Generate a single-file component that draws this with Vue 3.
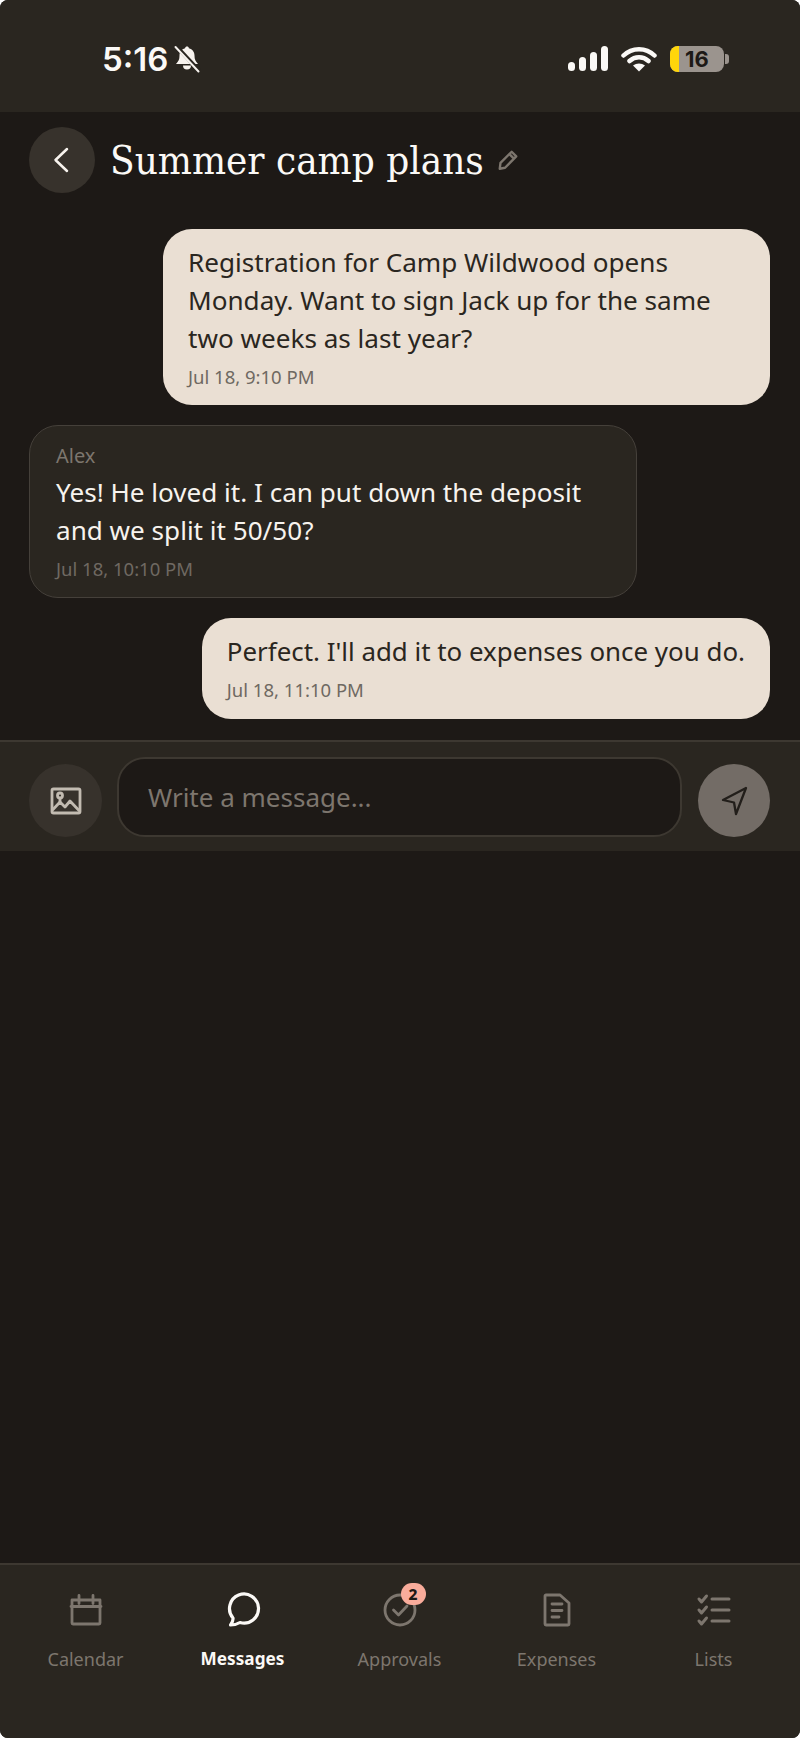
<script setup>
const messages = [
  { id: 1, mine: true, text: 'Registration for Camp Wildwood opens Monday. Want to sign Jack up for the same two weeks as last year?', time: 'Jul 18, 9:10 PM' },
  { id: 2, mine: false, author: 'Alex', text: 'Yes! He loved it. I can put down the deposit and we split it 50/50?', time: 'Jul 18, 10:10 PM' },
  { id: 3, mine: true, text: "Perfect. I'll add it to expenses once you do.", time: 'Jul 18, 11:10 PM' },
]
const tabs = ['Calendar', 'Messages', 'Approvals', 'Expenses', 'Lists']
</script>

<template>
  <div class="screen">
    <div class="status">
      <div class="status-left">
        <span class="clock">5:16</span>
        <svg width="28" height="28" viewBox="0 0 28 28">
          <path d="M14 1.500c1 0 1.800.7 1.900 1.700 3.600.9 5.600 3.700 5.600 7.300 0 4 1 5.800 3.500 8.500H3c2.500-2.700 3.500-4.500 3.500-8.500 0-3.600 2-6.400 5.600-7.300.1-1 .9-1.700 1.900-1.700zM10 20.500h8a4 4 0 0 1-8 0z" fill="#f7f3ee" />
          <path d="M3 1 26.500 26" stroke="#2a2620" stroke-width="4" />
          <path d="M2.500 2 25.500 26.500" stroke="#f7f3ee" stroke-width="2" stroke-linecap="round" />
        </svg>
      </div>
      <div class="status-right">
        <svg width="40" height="26" viewBox="0 0 40 26" fill="#fbf9f6">
          <rect x="0" y="16" width="7" height="9" rx="3.500" />
          <rect x="11" y="11" width="7" height="14" rx="3.500" />
          <rect x="22" y="6" width="7" height="19" rx="3.500" />
          <rect x="33" y="0" width="7" height="25" rx="3.500" />
        </svg>
        <svg width="36" height="26" viewBox="0 0 36 26">
          <path d="M2.500 9.500C11 1 25 1 33.500 9.500M8.500 15c5.500-5 13.500-5 19 0" fill="none" stroke="#fbf9f6" stroke-width="4.500" stroke-linecap="round" />
          <path d="M18 25.500l-6-6c3.500-2.800 8.500-2.800 12 0z" fill="#fbf9f6" />
        </svg>
        <div class="battery">
          <div class="battery-body">
            <span class="battery-fill"></span>
            <span class="battery-num">16</span>
          </div>
          <span class="battery-cap"></span>
        </div>
      </div>
    </div>

    <div class="header">
      <button class="back">
        <svg width="24" height="28" viewBox="0 0 24 28"><path d="M17 3 5.500 14 17 25" fill="none" stroke="#f7f3ee" stroke-width="2.500" stroke-linecap="round" stroke-linejoin="round" /></svg>
      </button>
      <h1 class="title">Summer camp plans</h1>
      <svg class="pencil" width="22" height="22" viewBox="0 0 24 24" fill="none" stroke="#7d766e" stroke-width="2.600" stroke-linejoin="round">
        <path d="M3 21.500l.8-6.300L16 3l5 5L8.800 20.500z" />
        <path d="M13.500 5.500l5 5" />
      </svg>
    </div>

    <div class="thread">
      <div v-for="m in messages" :key="m.id" class="bubble" :class="m.mine ? 'mine' : 'theirs'">
        <div v-if="m.author" class="author">{{ m.author }}</div>
        <div class="text">{{ m.text }}</div>
        <div class="time">{{ m.time }}</div>
      </div>
    </div>

    <div class="composer">
      <button class="photo">
        <svg width="32" height="28" viewBox="0 0 32 28" fill="none" stroke="#c2bbb1" stroke-width="2.800" stroke-linejoin="round">
          <rect x="2" y="2" width="28" height="24" rx="1.500" />
          <path d="M2.500 23l7.500-8 5 5 5-6 9.500 10" />
          <circle cx="10" cy="8.500" r="2.500" />
          <path d="M10 11v4" />
        </svg>
      </button>
      <div class="input">Write a message...</div>
      <button class="send">
        <svg width="30" height="30" viewBox="0 0 30 30" fill="none" stroke="#221e1a" stroke-width="2.300" stroke-linejoin="round">
          <path d="M27 2 4 14l11 2.500 2 11.500z" />
        </svg>
      </button>
    </div>

    <div class="fill"></div>

    <nav class="tabs">
      <div v-for="t in tabs" :key="t" class="tab" :class="{ active: t === 'Messages' }">
        <div class="tab-icon">
          <svg v-if="t === 'Calendar'" width="36" height="36" viewBox="0 0 36 36" fill="none" stroke="#7d766e" stroke-width="2.800" stroke-linecap="round" stroke-linejoin="round">
            <path d="M4 8h28v23a1 1 0 0 1-1 1H5a1 1 0 0 1-1-1zM3 14.500h30M11 3.500v8M25 3.500v8" />
          </svg>
          <svg v-if="t === 'Messages'" width="36" height="36" viewBox="0 0 36 36" fill="none" stroke="#fbf9f6" stroke-width="3.200" stroke-linecap="round" stroke-linejoin="round">
            <path transform="translate(1.500 0)" d="M4 33c1.800-2.200 2.800-4.300 2.500-7A14.500 14.500 0 1 1 13.500 30.500C10.500 32.300 7.500 33 4 33z" />
          </svg>
          <svg v-if="t === 'Approvals'" width="36" height="36" viewBox="0 0 36 36" fill="none" stroke="#7d766e" stroke-width="2.800" stroke-linecap="round" stroke-linejoin="round">
            <circle cx="18" cy="18" r="15" />
            <path d="M11.500 18l5 5 8.500-9" />
          </svg>
          <svg v-if="t === 'Expenses'" width="36" height="36" viewBox="0 0 36 36" fill="none" stroke="#7d766e" stroke-width="2.800" stroke-linecap="round" stroke-linejoin="round">
            <path d="M7 3h14l9 8v21a1 1 0 0 1-1 1H7a1 1 0 0 1-1-1V4a1 1 0 0 1 1-1zM13 12h10M13 18.500h10M13 25h7" />
          </svg>
          <svg v-if="t === 'Lists'" width="36" height="36" viewBox="0 0 36 36" fill="none" stroke="#7d766e" stroke-width="3" stroke-linecap="round" stroke-linejoin="round">
            <path d="M16 7h17M16 18h17M16 29h17M3 7l2.500 3 5-6M3 18l2.500 3 5-6M3 29l2.500 3 5-6" />
          </svg>
          <span v-if="t === 'Approvals'" class="badge">2</span>
        </div>
        <span class="tab-label">{{ t }}</span>
      </div>
    </nav>
  </div>
</template>

<style>
body { background: #fff; }
</style>

<style scoped>
.screen {
  width: 800px;
  height: 1738px;
  display: flex;
  flex-direction: column;
  background: #1d1916;
  border-radius: 8px;
  font-family: "Noto Sans", "Open Sans", sans-serif;
  color: #f7f3ee;
  overflow: hidden;
}
button { border: none; padding: 0; display: flex; align-items: center; justify-content: center; flex: none; }

.status {
  height: 112px;
  flex: none;
  background: #2a2620;
  display: flex;
  justify-content: space-between;
  align-items: center;
  padding: 6px 71px 0 102px;
  box-sizing: border-box;
}
.status-left { display: flex; align-items: center; gap: 5px; }
.clock { font: 600 33px "Inter", sans-serif; color: #fbf9f6; }
.status-right { display: flex; align-items: center; gap: 13px; }
.battery { display: flex; align-items: center; gap: 1px; }
.battery-body {
  position: relative;
  width: 54px;
  height: 26px;
  border-radius: 8px;
  background: #9b948e;
  overflow: hidden;
  display: flex;
  align-items: center;
  justify-content: center;
}
.battery-fill { position: absolute; left: 0; top: 0; bottom: 0; width: 9px; background: #ffd60a; }
.battery-num { position: relative; font: 700 22px "Inter", sans-serif; color: #1d1916; }
.battery-cap { width: 4px; height: 10px; border-radius: 0 3px 3px 0; background: #9b948e; }

.header {
  height: 96px;
  flex: none;
  display: flex;
  align-items: center;
  padding: 0 29px;
  box-sizing: border-box;
}
.back { width: 66px; height: 66px; border-radius: 50%; background: #37322c; }
.title {
  margin: 0 0 0 15px;
  font: 400 40px "DejaVu Serif Condensed", "DejaVu Serif", serif;
  color: #fbf9f6;
  white-space: nowrap;
}
.pencil { margin-left: 13px; }

.thread {
  display: flex;
  flex-direction: column;
  gap: 20px;
  padding: 21px 30px 21px 29px;
}
.bubble { box-sizing: border-box; border-radius: 29px; }
.mine {
  align-self: flex-end;
  background: #eadfd3;
  color: #2a2620;
  padding: 14px 25px 15px;
}
.bubble:first-child { width: 607px; }
.bubble:last-child { padding-bottom: 16px; }
.bubble:last-child .text { font-size: 25.900px; }
.theirs {
  width: 608px;
  background: #2a2620;
  border: 1px solid #45403a;
  padding: 15px 26px 15px;
}
.author { font-size: 20px; line-height: 29px; color: #7d766e; margin-bottom: 3px; }
.text { font-size: 26.100px; line-height: 38px; }
.time { font-size: 18.500px; line-height: 26px; margin-top: 7px; color: #6f6962; }

.composer {
  flex: none;
  height: 111px;
  box-sizing: border-box;
  background: #2a2620;
  border-top: 2px solid #3d3831;
  display: flex;
  align-items: center;
  padding: 0 30px 0 29px;
}
.photo { width: 73px; height: 73px; border-radius: 50%; background: #37322c; margin-top: 8px; }
.input {
  box-sizing: border-box;
  flex: none;
  width: 565px;
  height: 80px;
  margin-left: 15px;
  border: 2px solid #3d3831;
  border-radius: 28px;
  background: #1d1916;
  color: #7d766e;
  font-size: 26px;
  display: flex;
  align-items: center;
  padding-left: 29px;
}
.send { width: 72px; height: 73px; border-radius: 50%; background: #736c66; margin-left: 16px; margin-top: 8px; }

.fill { flex: 1; }

.tabs {
  flex: none;
  height: 175px;
  box-sizing: border-box;
  background: #2a2620;
  border-top: 2px solid #3d3831;
  display: grid;
  grid-template-columns: repeat(5, 157px);
  padding: 27px 0 0 7px;
}
.tab { display: flex; flex-direction: column; align-items: center; }
.tab-icon { position: relative; width: 36px; height: 36px; }
.badge {
  position: absolute;
  left: 19px;
  top: -9px;
  width: 25px;
  height: 22px;
  border-radius: 11px;
  background: #f9ac9b;
  color: #1d1916;
  font: 800 15.500px/22px "Noto Sans", sans-serif;
  text-align: center;
}
.tab-label { margin-top: 18px; font-size: 18px; line-height: 26px; color: #7d766e; }
.active .tab-label { color: #fbf9f6; font-weight: 700; font-size: 17.200px; }
</style>
